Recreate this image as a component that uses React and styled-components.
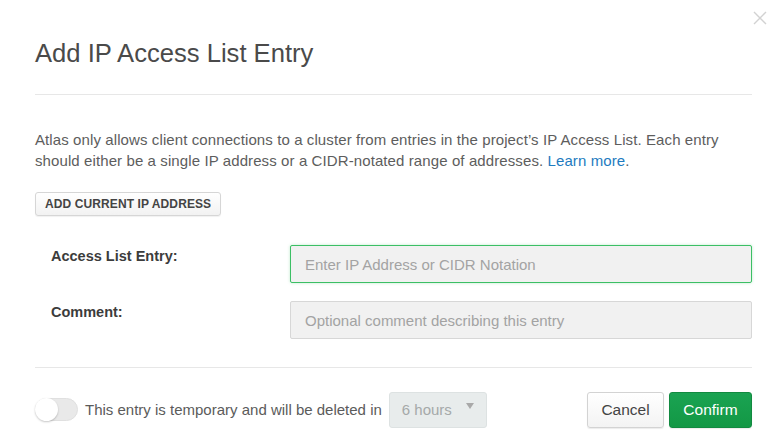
import React from "react";
import styled, { createGlobalStyle } from "styled-components";

const GlobalStyle = createGlobalStyle`
  html, body {
    margin: 0;
    padding: 0;
    background: #fff;
  }
  body {
    font-family: "Liberation Sans", Arial, sans-serif;
    color: #5b5b5b;
  }
`;

const Modal = styled.div`
  position: relative;
  width: 772px;
  height: 448px;
  box-sizing: border-box;
  padding: 0 20px 0 35px;
  background: #fff;
`;

const CloseButton = styled.button`
  position: absolute;
  top: 11px;
  right: 5px;
  width: 14px;
  height: 14px;
  padding: 0;
  border: none;
  background: none;
  cursor: pointer;
`;

const Header = styled.div`
  height: 95px;
  box-sizing: border-box;
  padding-top: 37px;
  border-bottom: 1px solid #e7e7e7;
`;

const Title = styled.h3`
  margin: 0;
  font-family: "Liberation Sans", Arial, sans-serif;
  font-weight: 400;
  font-size: 25.6px;
  line-height: 32px;
  color: #4a4a4a;
`;

const Body = styled.div`
  padding-top: 34px;
  height: 273px;
  box-sizing: border-box;
  border-bottom: 1px solid #e7e7e7;
`;

const Intro = styled.p`
  margin: 0;
  font-size: 15px;
  letter-spacing: 0.1px;
  line-height: 21px;
  color: #5d5d5d;
`;

const Link = styled.a`
  color: #1e7bc0;
  text-decoration: none;
`;

const SmallButton = styled.button`
  margin-top: 21px;
  height: 24px;
  padding: 0 9px;
  font-family: "Liberation Sans", Arial, sans-serif;
  font-size: 12px;
  font-weight: 700;
  letter-spacing: 0.1px;
  color: #444;
  background: linear-gradient(#fff, #f2f2f2);
  border: 1px solid #d6d6d6;
  border-radius: 3px;
  box-shadow: 0 1px 1px rgba(0, 0, 0, 0.06);
`;

const Fields = styled.div`
  display: flex;
  flex-direction: column;
  gap: 18px;
  margin-top: 29px;
`;

const FieldRow = styled.div`
  display: grid;
  grid-template-columns: 239px 1fr;
  align-items: start;
  padding-left: 16px;
`;

const Label = styled.label`
  padding-top: 1px;
  font-size: 14.5px;
  line-height: 20px;
  font-weight: 700;
  color: #3c3c3c;
`;

const TextInput = styled.input`
  height: 38px;
  box-sizing: border-box;
  padding: 0 14px;
  font-family: "Liberation Sans", Arial, sans-serif;
  font-size: 15px;
  color: #444;
  background: #f1f1f1;
  border: 1px solid ${(p) => (p.$focused ? "#3cbf65" : "#d7d7d7")};
  box-shadow: ${(p) => (p.$focused ? "0 0 3px rgba(60, 191, 101, 0.35)" : "none")};
  border-radius: 2px;
  outline: none;

  &::placeholder {
    color: #a3a3a3;
  }
`;

const Footer = styled.div`
  display: flex;
  align-items: center;
  height: 80px;
  padding-top: 3px;
  box-sizing: border-box;
`;

const Toggle = styled.div`
  position: relative;
  width: 43px;
  height: 23px;
  box-sizing: border-box;
  border-radius: 12px;
  background: #e9e9e9;
  border: 1px solid #e0e0e0;
  flex-shrink: 0;
`;

const Knob = styled.div`
  position: absolute;
  left: -1px;
  top: -1px;
  width: 23px;
  height: 23px;
  border-radius: 50%;
  background: #fff;
  box-shadow: 0 1px 2px rgba(0, 0, 0, 0.22);
`;

const ToggleText = styled.span`
  margin-left: 7px;
  font-size: 15px;
  color: #5b5b5b;
`;

const Select = styled.div`
  display: flex;
  align-items: center;
  gap: 14px;
  margin-left: 7px;
  height: 36px;
  padding: 0 12px;
  box-sizing: border-box;
  background: #e8ecec;
  border: 1px solid #dde2e2;
  border-radius: 3px;
  font-size: 15px;
  color: #a5a9a9;
`;

const Caret = styled.span`
  width: 0;
  height: 0;
  margin-top: -7px;
  border-left: 4px solid transparent;
  border-right: 4px solid transparent;
  border-top: 6px solid #a9a9a9;
`;

const Actions = styled.div`
  display: flex;
  gap: 5px;
  margin-left: auto;
`;

const ActionButton = styled.button`
  height: 36px;
  padding: 0;
  font-family: "Liberation Sans", Arial, sans-serif;
  font-size: 15.5px;
  border-radius: 3px;
  cursor: pointer;
  color: ${(p) => (p.$primary ? "#fff" : "#444")};
  background: ${(p) =>
    p.$primary ? "linear-gradient(#1aa352, #139845)" : "linear-gradient(#fff, #f3f3f3)"};
  border: 1px solid ${(p) => (p.$primary ? "#128a40" : "#d3d3d3")};
  box-shadow: 0 1px 1px rgba(0, 0, 0, 0.08);
  width: ${(p) => (p.$primary ? "83px" : "77px")};
`;

export default function App() {
  return (
    <>
      <GlobalStyle />
      <Modal>
        <CloseButton aria-label="Close">
          <svg width="14" height="14" viewBox="0 0 14 14">
            <path d="M1 1L13 13M13 1L1 13" stroke="#d2d2d2" strokeWidth="1.4" />
          </svg>
        </CloseButton>
        <Header>
          <Title>Add IP Access List Entry</Title>
        </Header>
        <Body>
          <Intro>
            Atlas only allows client connections to a cluster from entries in the project’s IP
            Access List. Each entry should either be a single IP address or a CIDR-notated range
            of addresses. <Link href="#">Learn more</Link>.
          </Intro>
          <SmallButton>ADD CURRENT IP ADDRESS</SmallButton>
          <Fields>
            <FieldRow>
              <Label>Access List Entry:</Label>
              <TextInput $focused placeholder="Enter IP Address or CIDR Notation" />
            </FieldRow>
            <FieldRow>
              <Label>Comment:</Label>
              <TextInput placeholder="Optional comment describing this entry" />
            </FieldRow>
          </Fields>
        </Body>
        <Footer>
          <Toggle>
            <Knob />
          </Toggle>
          <ToggleText>This entry is temporary and will be deleted in</ToggleText>
          <Select>
            6 hours
            <Caret />
          </Select>
          <Actions>
            <ActionButton>Cancel</ActionButton>
            <ActionButton $primary>Confirm</ActionButton>
          </Actions>
        </Footer>
      </Modal>
    </>
  );
}
